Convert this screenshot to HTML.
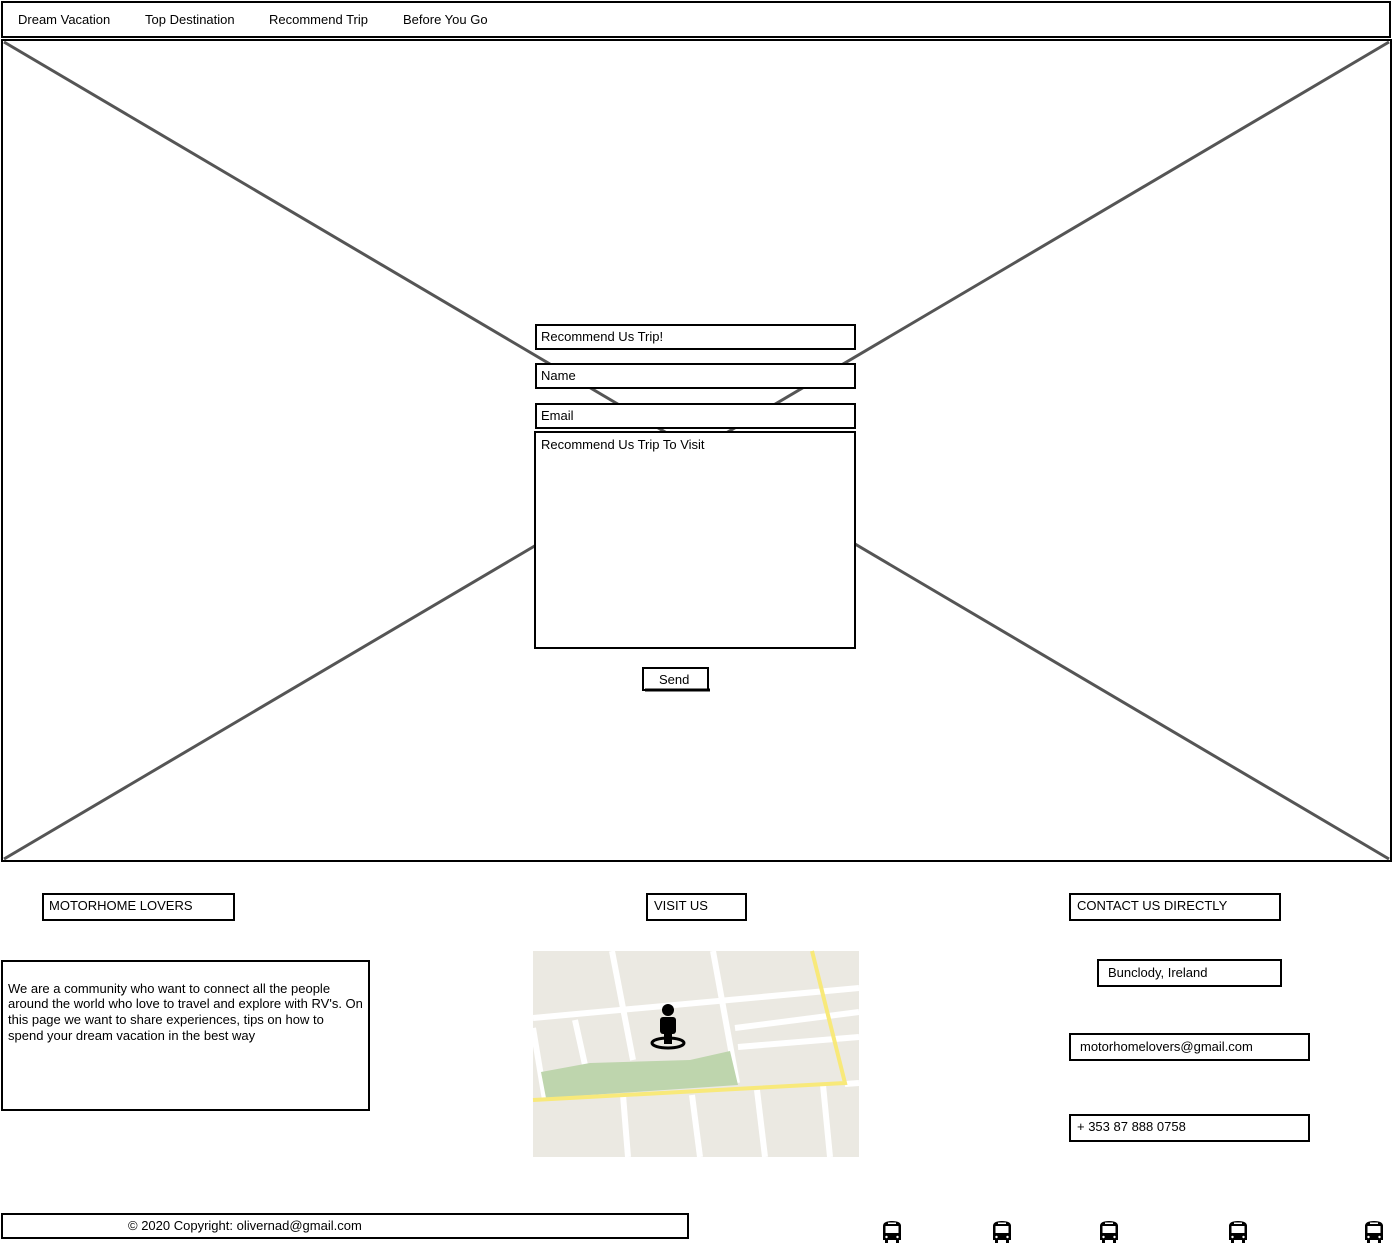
<!DOCTYPE html>
<html><head><style>
body{margin:0;width:1393px;height:1245px;background:#fff;overflow:hidden;font-family:"Liberation Sans",sans-serif;}
svg{position:absolute;left:0;top:0}
text{font-family:"Liberation Sans",sans-serif;font-size:13px;fill:#000}
</style></head><body>
<svg width="1393" height="1245" viewBox="0 0 1393 1245">
<g fill="none" stroke="#000" stroke-width="2">
<rect x="2" y="2" width="1388" height="35"/>
<rect x="2" y="40" width="1389" height="821"/>
</g>
<g stroke="#555" stroke-width="3">
<line x1="4" y1="42" x2="1389" y2="859"/>
<line x1="1389" y1="42" x2="4" y2="859"/>
</g>
<g fill="#fff" stroke="#000" stroke-width="2">
<rect x="536" y="325" width="319" height="24"/>
<rect x="536" y="364" width="319" height="24"/>
<rect x="536" y="404" width="319" height="24"/>
<rect x="535" y="432" width="320" height="216"/>
<rect x="643" y="668" width="65" height="22"/>
<rect x="43" y="894" width="191" height="26"/>
<rect x="647" y="894" width="99" height="26"/>
<rect x="1070" y="894" width="210" height="26"/>
<rect x="2" y="961" width="367" height="149"/>
<rect x="1098" y="960" width="183" height="26"/>
<rect x="1070" y="1034" width="239" height="26"/>
<rect x="1070" y="1115" width="239" height="26"/>
<rect x="2" y="1214" width="686" height="24"/>
</g>
<line x1="645" y1="690" x2="710" y2="690" stroke="#000" stroke-width="3"/>
<text x="18" y="24">Dream Vacation</text>
<text x="145" y="24">Top Destination</text>
<text x="269" y="24">Recommend Trip</text>
<text x="403" y="24">Before You Go</text>
<text x="541" y="341">Recommend Us Trip!</text>
<text x="541" y="380">Name</text>
<text x="541" y="420">Email</text>
<text x="541" y="449">Recommend Us Trip To Visit</text>
<text x="659" y="684">Send</text>
<text x="49" y="910">MOTORHOME LOVERS</text>
<text x="654" y="910">VISIT US</text>
<text x="1077" y="910">CONTACT US DIRECTLY</text>
<text x="1108" y="977">Bunclody, Ireland</text>
<text x="1080" y="1051">motorhomelovers@gmail.com</text>
<text x="1077" y="1131">+ 353 87 888 0758</text>
<text x="128" y="1230">© 2020 Copyright: olivernad@gmail.com</text>
<g style="font-size:12.5px">
<text x="8" y="993">We are a community who want to connect all the people</text>
<text x="8" y="1008">around the world who love to travel and explore with RV's. On</text>
<text x="8" y="1024">this page we want to share experiences, tips on how to</text>
<text x="8" y="1040">spend your dream vacation in the best way</text>
</g>
<rect x="533" y="951" width="326" height="206" fill="#ebe9e2"/>
<g stroke="#fff" stroke-width="6" fill="none">
<line x1="612" y1="951" x2="633" y2="1060"/>
<line x1="623" y1="1095" x2="628" y2="1157"/>
<line x1="713" y1="951" x2="737" y2="1083"/>
<line x1="575" y1="1020" x2="585" y2="1065"/>
<line x1="533" y1="1018" x2="859" y2="988"/>
<line x1="735" y1="1028" x2="859" y2="1012"/>
<line x1="738" y1="1047" x2="859" y2="1037"/>
<line x1="692" y1="1095" x2="700" y2="1157"/>
<line x1="757" y1="1090" x2="765" y2="1157"/>
<line x1="823" y1="1085" x2="830" y2="1157"/>
<line x1="533" y1="1028" x2="545" y2="1100"/>
<line x1="845" y1="1084" x2="859" y2="1083"/>
</g>
<polygon points="541,1072,590,1063,690,1060,730,1051,738,1085,546,1098" fill="#bed5ad"/>
<polyline points="533,1100 845,1083 812,951" fill="none" stroke="#f8e97a" stroke-width="4"/>
<circle cx="668" cy="1010" r="6"/>
<rect x="660" y="1017" width="16" height="17" rx="3"/>
<rect x="664" y="1028" width="8" height="16"/>
<ellipse cx="668" cy="1043" rx="16" ry="5" fill="none" stroke="#000" stroke-width="3"/>
<g id="bus">
<path d="M883 1226 q0-5 9-5 q9 0 9 5 v14 h-2 v3 h-3 v-3 h-8 v3 h-3 v-3 h-2z" fill="#000"/>
<rect x="885.5" y="1226" width="13" height="7" fill="#fff"/>
<rect x="888" y="1222.5" width="8" height="1.5" fill="#fff"/>
<circle cx="886.5" cy="1237" r="1.2" fill="#fff"/><circle cx="897.5" cy="1237" r="1.2" fill="#fff"/>
</g>
<use href="#bus" x="110"/>
<use href="#bus" x="217"/>
<use href="#bus" x="346"/>
<use href="#bus" x="482"/>
</svg>
</body></html>
